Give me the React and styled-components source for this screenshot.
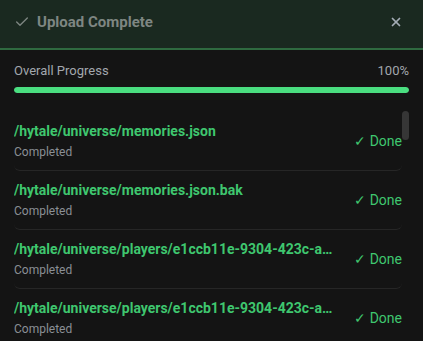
import React from 'react';
import styled, { createGlobalStyle } from 'styled-components';
import { Check, X } from 'lucide-react';

const GlobalStyle = createGlobalStyle`
  html, body {
    margin: 0;
    padding: 0;
    background: #141414;
    font-family: Roboto, 'Liberation Sans', sans-serif;
  }
  * { box-sizing: border-box; }
`;

const Panel = styled.div`
  height: 100vh;
  display: flex;
  flex-direction: column;
  background: #141414;
  overflow: hidden;
`;

const Header = styled.div`
  height: 50px;
  flex-shrink: 0;
  display: flex;
  align-items: center;
  padding: 0 14px 4px 14px;
  background: #1a2920;
  border-bottom: 2px solid #2f6a40;
`;

const Title = styled.h2`
  margin: 0 0 0 7px;
  flex: 1;
  font-size: 15px;
  font-weight: 700;
  color: #7e8682;
  line-height: 24px;
`;

const CloseBtn = styled.button`
  background: none;
  border: 0;
  padding: 0;
  margin-right: 6px;
  display: flex;
  color: #a3acb5;
  cursor: pointer;
`;

const ProgressBlock = styled.div`
  flex-shrink: 0;
  padding: 13px 14px 17px;
`;

const ProgressRow = styled.div`
  display: flex;
  justify-content: space-between;
  font-size: 13px;
  line-height: 16px;
  color: #a2a7ad;
`;

const Track = styled.div`
  margin-top: 8px;
  height: 6px;
  border-radius: 3px;
  background: #2a2a2a;
  overflow: hidden;
`;

const Fill = styled.div`
  height: 100%;
  background: #4ade80;
  border-radius: 3px;
`;

const ListWrap = styled.div`
  flex: 1;
  min-height: 0;
  position: relative;
  display: flex;
`;

const List = styled.div`
  flex: 1;
  overflow-y: auto;
  margin: 0 21px 0 14px;
  padding-top: 2px;
  scrollbar-width: none;
  &::-webkit-scrollbar { display: none; }
`;

const Thumb = styled.div`
  position: absolute;
  top: 1px;
  right: 14px;
  width: 7px;
  height: 29px;
  border-radius: 4px;
  background: #363636;
`;

const Item = styled.div`
  display: flex;
  align-items: center;
  padding: 9px 0;
  border-bottom: 1px solid #262626;
  border-radius: 0 0 6px 6px;
`;

const Info = styled.div`
  flex: 1;
  min-width: 0;
  display: flex;
  flex-direction: column;
  gap: 3px;
`;

const Name = styled.div`
  font-size: 14px;
  font-weight: 700;
  line-height: 20px;
  color: #3fc76f;
  white-space: nowrap;
  overflow: hidden;
  text-overflow: ellipsis;
  max-width: 322px;
`;

const Status = styled.div`
  font-size: 12px;
  line-height: 17px;
  color: #8a8f95;
`;

const Done = styled.span`
  flex-shrink: 0;
  margin-left: 10px;
  font-size: 14px;
  color: #3fc76f;
`;

const files = [
  '/hytale/universe/memories.json',
  '/hytale/universe/memories.json.bak',
  '/hytale/universe/players/e1ccb11e-9304-423c-a8f2-6b1d0c7e4a91.json',
  '/hytale/universe/players/e1ccb11e-9304-423c-a8f2-6b1d0c7e4a91.json.bak',
];
for (let i = 0; i < 28; i++) {
  files.push(`/hytale/universe/worlds/default/chunks/region_${i}.bin`);
}

export default function App() {
  return (
    <>
      <GlobalStyle />
      <Panel>
        <Header>
          <Check size={16} color="#7e8682" strokeWidth={2} />
          <Title>Upload Complete</Title>
          <CloseBtn><X size={14} strokeWidth={3} /></CloseBtn>
        </Header>
        <ProgressBlock>
          <ProgressRow>
            <span>Overall Progress</span>
            <span>100%</span>
          </ProgressRow>
          <Track><Fill style={{ width: '100%' }} /></Track>
        </ProgressBlock>
        <ListWrap>
          <List>
            {files.map((f) => (
              <Item key={f}>
                <Info>
                  <Name>{f}</Name>
                  <Status>Completed</Status>
                </Info>
                <Done>✓ Done</Done>
              </Item>
            ))}
          </List>
          <Thumb />
        </ListWrap>
      </Panel>
    </>
  );
}
